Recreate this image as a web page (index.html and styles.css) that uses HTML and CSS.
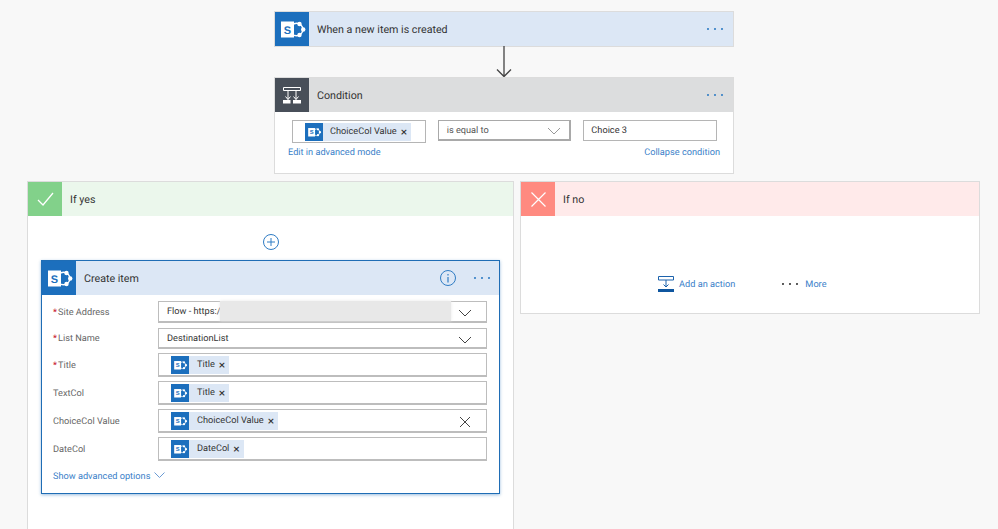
FILE: index.html
```html
<!DOCTYPE html>
<html lang="en">
<head>
<meta charset="utf-8">
<title>Flow</title>
<link rel="stylesheet" href="styles.css">
</head>
<body>
<svg class="defs" width="0" height="0" aria-hidden="true">
  <symbol id="sp" viewBox="0 0 34 34">
    <circle cx="21.500" cy="17.500" r="6.300" fill="none" stroke="#fff" stroke-width="1.400"/>
    <circle cx="24.500" cy="12" r="2.200" fill="#fff"/>
    <circle cx="28.200" cy="17.500" r="2.200" fill="#fff"/>
    <circle cx="24.500" cy="23" r="2.200" fill="#fff"/>
    <rect x="6" y="9.500" width="13" height="16" fill="#fff"/>
  </symbol>
  <symbol id="dots3" viewBox="0 0 18 4">
    <circle cx="2" cy="2" r="1.050"/><circle cx="9" cy="2" r="1.050"/><circle cx="16" cy="2" r="1.050"/>
  </symbol>
</svg>

<main class="canvas">
  <section class="card trigger">
    <header class="head head-blue">
      <span class="tile tile-blue"><svg class="tile-svg" viewBox="0 0 34 34"><use href="#sp"/><text class="sp-s" x="12.500" y="21.500">S</text></svg></span>
      <span class="head-title">When a new item is created</span>
      <svg class="dots"><use href="#dots3"/></svg>
    </header>
  </section>

  <svg class="arrow" width="18" height="32" viewBox="0 0 18 32"><path d="M9 0v30.500M2 23.500l7 7 7-7" fill="none" stroke="#444" stroke-width="1.300"/></svg>

  <section class="card condition">
    <header class="head head-grey">
      <span class="tile tile-dark">
        <svg class="tile-svg" viewBox="0 0 34 34">
          <path d="M8.500 9.500h17v3h-17zM13 12.500v9M21 12.500v9M10.500 18.500l2.500 3 2.500-3M18.500 18.500l2.500 3 2.500-3" fill="none" stroke="#fff" stroke-width="1"/>
          <path d="M8 22h7.500v3.500H8zM18 22h8v3.500h-8z" fill="#fff"/>
        </svg>
      </span>
      <span class="head-title">Condition</span>
      <svg class="dots"><use href="#dots3"/></svg>
    </header>
    <div class="cond-body">
      <div class="cond-row">
        <div class="box box-token"><span class="token"><span class="token-ico"><svg class="token-svg" viewBox="0 0 34 34"><use href="#sp"/><text class="sp-s" x="12.500" y="21.500">S</text></svg></span><span class="token-label">ChoiceCol Value</span><span class="token-x">×</span></span></div>
        <div class="box box-select"><span>is equal to</span><svg class="chev-sm" width="14" height="8" viewBox="0 0 14 8"><path d="M1 1l6 6 6-6" fill="none" stroke="#999" stroke-width="1"/></svg></div>
        <div class="box box-input">Choice 3</div>
      </div>
      <div class="cond-links"><a class="link">Edit in advanced mode</a><a class="link">Collapse condition</a></div>
    </div>
  </section>

  <div class="branches">
    <section class="branch branch-yes">
      <header class="head head-green">
        <span class="tile tile-green"><svg class="tile-svg" viewBox="0 0 34 34"><path d="M10 18l5 5 10-12" fill="none" stroke="#fff" stroke-width="1.300"/></svg></span>
        <span class="head-title">If yes</span>
      </header>
      <div class="yes-body">
        <svg class="plus" width="18" height="18" viewBox="0 0 18 18"><circle cx="9" cy="9" r="7.500" fill="#fff" stroke="#2f7cc4" stroke-width="1"/><path d="M9 5v8M5 9h8" stroke="#2f7cc4" stroke-width="1"/></svg>
        <section class="action">
          <header class="head head-blue head-action">
            <span class="tile tile-blue"><svg class="tile-svg" viewBox="0 0 34 34"><use href="#sp"/><text class="sp-s" x="12.500" y="21.500">S</text></svg></span>
            <span class="head-title">Create item</span>
            <svg class="info" width="18" height="18" viewBox="0 0 18 18"><circle cx="9" cy="9" r="7.500" fill="none" stroke="#2f7cc4" stroke-width="1"/><path d="M9 8v5.500M9 5v1.500" stroke="#2f7cc4" stroke-width="1.200"/></svg>
            <svg class="dots"><use href="#dots3"/></svg>
          </header>
          <div class="form">
            <div class="row row-site"><label class="lab"><i>*</i>Site Address</label>
              <div class="field field-select"><span>Flow - https:/</span><span class="redact"></span><svg class="chev" width="14" height="8" viewBox="0 0 14 8"><path d="M1 1l6 6 6-6" fill="none" stroke="#444" stroke-width="1"/></svg></div></div>
            <div class="row row-list"><label class="lab"><i>*</i>List Name</label>
              <div class="field field-select field-list"><span>DestinationList</span><svg class="chev" width="14" height="8" viewBox="0 0 14 8"><path d="M1 1l6 6 6-6" fill="none" stroke="#444" stroke-width="1"/></svg></div></div>
            <div class="row"><label class="lab"><i>*</i>Title</label>
              <div class="field"><span class="token"><span class="token-ico"><svg class="token-svg" viewBox="0 0 34 34"><use href="#sp"/><text class="sp-s" x="12.500" y="21.500">S</text></svg></span><span class="token-label">Title</span><span class="token-x">×</span></span></div></div>
            <div class="row"><label class="lab">TextCol</label>
              <div class="field"><span class="token"><span class="token-ico"><svg class="token-svg" viewBox="0 0 34 34"><use href="#sp"/><text class="sp-s" x="12.500" y="21.500">S</text></svg></span><span class="token-label">Title</span><span class="token-x">×</span></span></div></div>
            <div class="row"><label class="lab">ChoiceCol Value</label>
              <div class="field"><span class="token"><span class="token-ico"><svg class="token-svg" viewBox="0 0 34 34"><use href="#sp"/><text class="sp-s" x="12.500" y="21.500">S</text></svg></span><span class="token-label">ChoiceCol Value</span><span class="token-x">×</span></span>
                <svg class="clear" width="12" height="12" viewBox="0 0 12 12"><path d="M1 1l10 10M11 1 1 11" stroke="#444" stroke-width="1"/></svg></div></div>
            <div class="row"><label class="lab">DateCol</label>
              <div class="field"><span class="token"><span class="token-ico"><svg class="token-svg" viewBox="0 0 34 34"><use href="#sp"/><text class="sp-s" x="12.500" y="21.500">S</text></svg></span><span class="token-label">DateCol</span><span class="token-x">×</span></span></div></div>
            <div class="advanced"><a class="link">Show advanced options</a><svg width="11" height="6" viewBox="0 0 11 6"><path d="M.5.500l5 5 5-5" fill="none" stroke="#6a9bd4" stroke-width="1"/></svg></div>
          </div>
        </section>
      </div>
    </section>

    <section class="branch branch-no">
      <header class="head head-red">
        <span class="tile tile-red"><svg class="tile-svg" viewBox="0 0 34 34"><path d="M10.500 10.500l14 14M24.500 10.500l-14 14" fill="none" stroke="#fff" stroke-width="1.200"/></svg></span>
        <span class="head-title">If no</span>
      </header>
      <div class="no-body">
        <a class="link add"><svg width="16" height="16" viewBox="0 0 16 16"><path d="M.5.500h15v3.500H.5zM8 4v7M5.500 8.500 8 11l2.500-2.500" fill="none" stroke="#1c62ac" stroke-width="1"/><path d="M0 13h16v3H0z" fill="#0f569f"/></svg><span>Add an action</span></a>
        <a class="link more"><svg class="more-dots"><use href="#dots3"/></svg><span>More</span></a>
      </div>
    </section>
  </div>
</main>
</body>
</html>
```

FILE: styles.css
```css
* { box-sizing: border-box; }
html, body { margin: 0; height: 529px; overflow: hidden; }
body {
  background: #f8f8f8;
  font-family: Roboto, "Open Sans", sans-serif;
  font-size: 9.200px;
  color: #333;
  text-rendering: geometricPrecision;
}
.defs { display: block; height: 0; }
.canvas { display: flex; flex-direction: column; align-items: center; padding-top: 12px; }

.card { width: 458px; margin-left: 10px; background: #fff; box-shadow: 0 0 0 1px #dcdcdc; }
.arrow { display: block; margin-left: 10px; }

.head { display: flex; align-items: center; height: 34px; }
.head-blue { background: #dce7f5; }
.head-grey { background: #dcddde; }
.head-green { background: #ebf7ec; }
.head-red { background: #ffeaea; }
.tile { flex: none; width: 34px; height: 34px; display: block; }
.tile-svg { display: block; width: 34px; height: 34px; }
.sp-s { font-family: "Liberation Sans", sans-serif; font-weight: 700; font-size: 11px; text-anchor: middle; fill: #1c6fbd; }
.tile-blue { background: #1c6fbd; }
.tile-dark { background: #484f59; }
.tile-green { background: #82d18a; }
.tile-red { background: #ff8a80; }
.head-title { flex: 1; margin-left: 8px; font-size: 10.700px; color: #333; }
.dots { flex: none; width: 18px; height: 4px; margin-right: 9px; fill: #2f7cc4; }

.cond-body { padding: 8px 13px 0; height: 61px; }
.cond-row { display: flex; align-items: flex-start; gap: 12px; padding: 0 3px 0 4px; }
.box { width: 134px; display: flex; align-items: center; background: #fff; }
.box-token { height: 23px; border: 1px solid #b5b5b5; padding-left: 12px; }
.box-select { height: 21px; border: 2px solid #a9a9a9; border-width: 1px 2px 2px 1px; padding: 1px 8px 0 8px; justify-content: space-between; color: #555; }
.box-input { height: 21px; border: 1px solid #b5b5b5; padding-left: 7px; padding-bottom: 1px; }
.cond-links { display: flex; justify-content: space-between; margin-top: 3px; line-height: 14px; }
.link { color: #3b7fc9; font-size: 9.200px; }

.token { display: inline-flex; align-items: center; height: 18px; background: #dce7f5; padding-right: 4px; }
.token-ico { display: block; width: 18px; height: 18px; background: #1c6fbd; }
.token-svg { display: block; width: 18px; height: 18px; }
.token-label { margin-left: 8px; padding-bottom: 1px; font-size: 9.200px; color: #333; }
.token-x { margin-left: 4px; font-size: 12px; line-height: 1; color: #333; }
.box-token .token-label { margin-left: 7px; }

.branches { display: flex; align-items: flex-start; gap: 8px; width: 100%; margin-top: 9px; padding-left: 28px; }
.branch { background: #fff; box-shadow: 0 0 0 1px #dcdcdc; }
.branch-yes { width: 485px; height: 360px; }
.branch-no { width: 458px; height: 131px; }

.yes-body { display: flex; flex-direction: column; align-items: center; padding-top: 17px; }
.plus { display: block; }
.action { width: 459px; margin-top: 9px; border: 1px solid #1f6db5; box-shadow: 0 1px 3px rgba(31, 109, 181, .45); background: #fff; }
.head-action .dots { margin-right: 8px; }
.info { margin-right: 16px; }
.form { padding: 6px 12px 0 11px; height: 198px; }
.row { display: flex; align-items: center; margin-bottom: 4px; }
.row-site { margin-bottom: 5px; }
.lab { flex: none; width: 105px; font-size: 9.200px; color: #666; }
.lab i { color: #c8202f; font-style: normal; margin-right: 1px; }
.field { position: relative; display: flex; align-items: center; width: 330px; height: 24px; padding-left: 12px; border: 1px solid #bdbdbd; border-width: 1px 1px 2px 1px; background: #fff; }
.field-select { height: 22px; padding-left: 8px; color: #333; }
.field-list { height: 21px; }
.chev { position: absolute; right: 14px; top: 7px; }
.redact { position: absolute; left: 61px; top: -1px; width: 231px; height: 20px; background: #e8e8e8; box-shadow: 0 0 3px #e8e8e8; }
.clear { position: absolute; right: 15px; top: 6px; }
.advanced { display: flex; align-items: center; gap: 4px; margin-top: 10px; }
.advanced svg { margin-top: -3px; }

.no-body { display: flex; align-items: center; padding: 60px 0 0 137px; }
.add { display: flex; align-items: center; gap: 5px; }
.add svg { display: block; }
.more { display: flex; align-items: center; gap: 6px; margin-left: 46px; }
.more-dots { width: 18px; height: 4px; fill: #333; }
```
